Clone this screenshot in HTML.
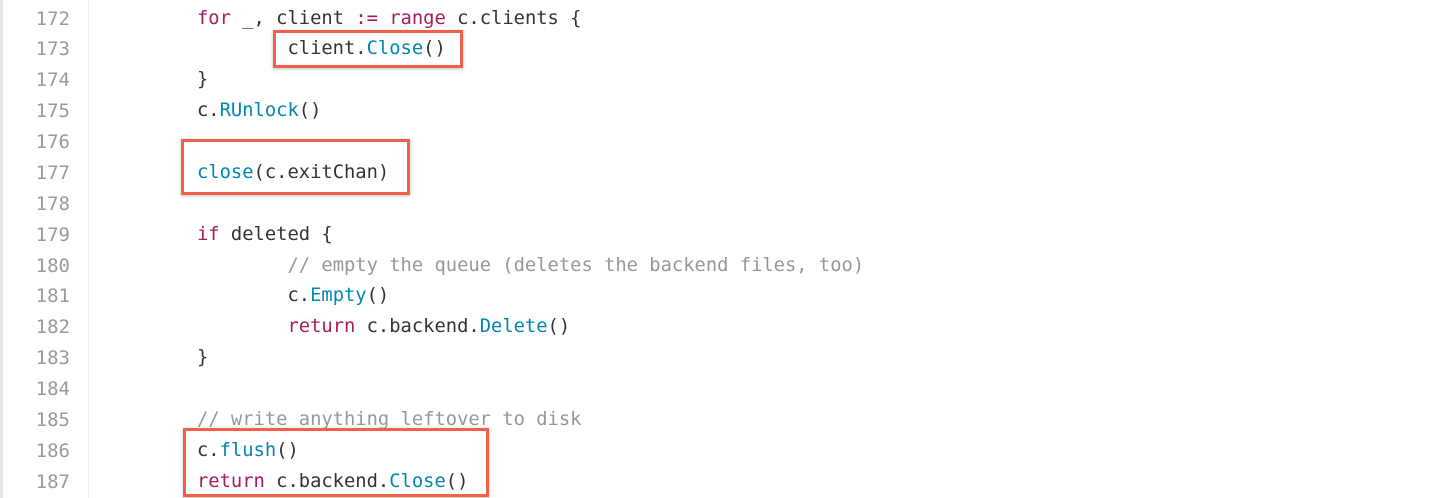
<!DOCTYPE html>
<html><head><style>
body{margin:0;width:1440px;height:498px;background:#fff;overflow:hidden;position:relative;font-family:"DejaVu Sans Mono","Liberation Mono",monospace;}
.lb{position:absolute;left:0;top:0;width:3px;height:498px;background:#e5e5e5}
.gb{position:absolute;left:88px;top:0;width:1px;height:498px;background:#eee}
.ln{position:absolute;left:0;width:70px;text-align:right;color:#999;font-size:19px;line-height:30.87px;}
.code{position:absolute;left:197px;top:3.5px;font-size:18.8px;line-height:30.87px;color:#333;white-space:pre;}
.k{color:#a71d5d}.f{color:#0086b3}.c{color:#969896}
.box{position:absolute;border:3.5px solid #f0604a;box-shadow:0 1px 3px rgba(0,0,0,.25);box-sizing:border-box}
</style></head><body>
<div class="lb"></div><div class="gb"></div>
<div class="ln" style="top:3.5px">172<br>173<br>174<br>175<br>176<br>177<br>178<br>179<br>180<br>181<br>182<br>183<br>184<br>185<br>186<br>187</div>
<div class="code"><span class="k">for</span> _, client <span class="k">:=</span> <span class="k">range</span> c.clients {
        client.<span class="f">Close</span>()
}
c.<span class="f">RUnlock</span>()

<span class="f">close</span>(c.exitChan)

<span class="k">if</span> deleted {
        <span class="c">// empty the queue (deletes the backend files, too)</span>
        c.<span class="f">Empty</span>()
        <span class="k">return</span> c.backend.<span class="f">Delete</span>()
}

<span class="c">// write anything leftover to disk</span>
c.<span class="f">flush</span>()
<span class="k">return</span> c.backend.<span class="f">Close</span>()</div>
<div class="box" style="left:273px;top:30px;width:190px;height:38px"></div>
<div class="box" style="left:181px;top:139px;width:229px;height:56px"></div>
<div class="box" style="left:183px;top:428px;width:306px;height:69px"></div>
</body></html>
